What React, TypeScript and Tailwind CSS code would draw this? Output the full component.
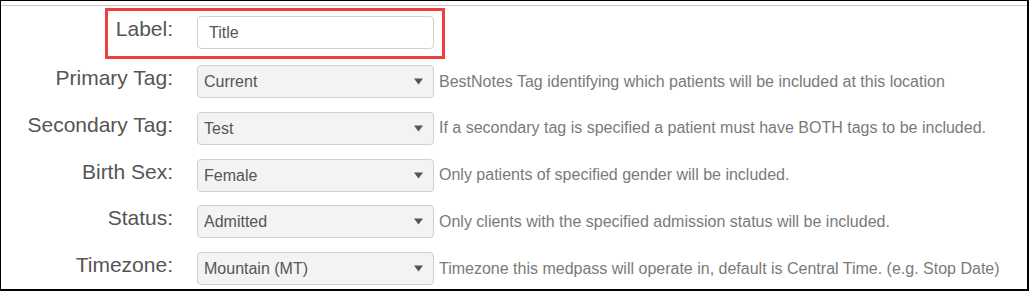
const rows = [
  { label: 'Primary Tag:', value: 'Current', help: 'BestNotes Tag identifying which patients will be included at this location' },
  { label: 'Secondary Tag:', value: 'Test', help: 'If a secondary tag is specified a patient must have BOTH tags to be included.' },
  { label: 'Birth Sex:', value: 'Female', help: 'Only patients of specified gender will be included.' },
  { label: 'Status:', value: 'Admitted', help: 'Only clients with the specified admission status will be included.' },
  { label: 'Timezone:', value: 'Mountain (MT)', help: 'Timezone this medpass will operate in, default is Central Time. (e.g. Stop Date)' },
];

function Caret() {
  return (
    <svg width="9" height="7" viewBox="0 0 9 7" className="shrink-0">
      <path d="M0 0.5 L9 0.5 L4.5 6.5 Z" fill="#555" />
    </svg>
  );
}

export default function App() {
  return (
    <div
      className="w-[1029px] h-[291px] bg-white border-l border-t border-r-2 border-b-2 border-black overflow-hidden"
      style={{ fontFamily: '"Liberation Sans", Arial, sans-serif' }}
    >
      <div className="mt-[4px] border-t border-[#cccccc]" />
      <div className="flex flex-col pt-[10px]">
        {/* Label row, with the red highlight box drawn over it */}
        <div className="relative flex items-start mb-[16px]">
          <div className="absolute left-[104px] top-[-8px] w-[340px] h-[51px] border-[3px] border-[#ef4040] pointer-events-none" />
          <div className="w-[172px] shrink-0 text-right text-[21px] leading-[25px] text-[#555]">Label:</div>
          <div className="ml-[24px] w-[237px] h-[33px] rounded-[4px] border border-[#d0d0d0] bg-white flex items-center pl-[11px] text-[16px] text-[#555]">
            Title
          </div>
        </div>
        <div className="flex flex-col gap-[13.75px]">
          {rows.map((r) => (
            <div key={r.label} className="flex items-start">
              <div className="w-[172px] shrink-0 text-right text-[21px] leading-[25px] text-[#555]">{r.label}</div>
              <div className="ml-[24px] w-[237px] h-[33px] shrink-0 rounded-[4px] border border-[#d0d0d0] bg-[#f3f3f3] flex items-center justify-between pl-[6px] pr-[10px] text-[16px] text-[#555]">
                <span className="pt-[1px]">{r.value}</span>
                <Caret />
              </div>
              <div className="ml-[5px] h-[33px] flex items-center text-[16px] text-[#7a7a7a]">{r.help}</div>
            </div>
          ))}
        </div>
      </div>
    </div>
  );
}
